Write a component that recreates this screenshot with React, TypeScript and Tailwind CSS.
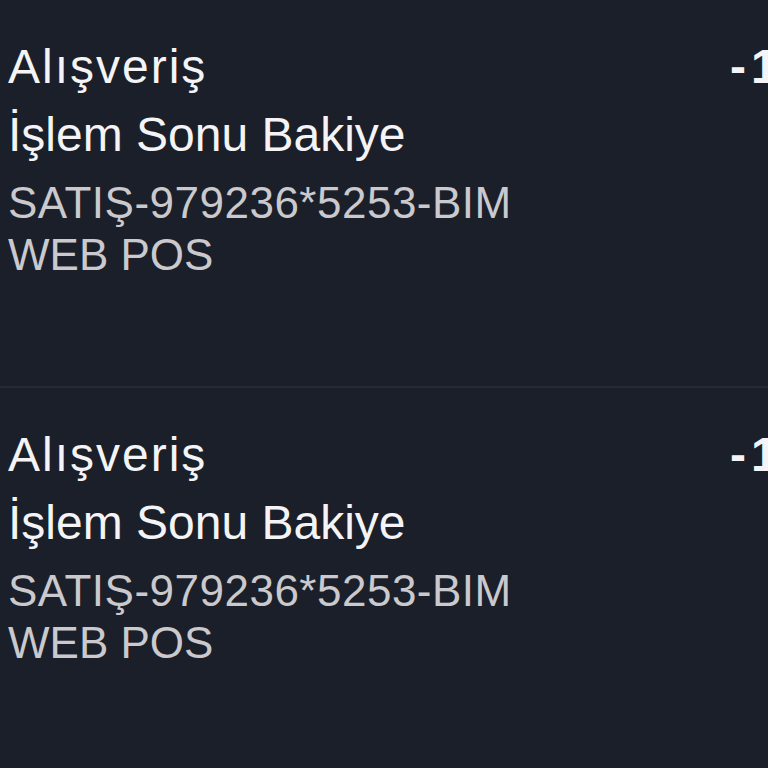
const rows = [
  { title: 'Alışveriş', sub: 'İşlem Sonu Bakiye', desc: 'SATIŞ-979236*5253-BIM', desc2: 'WEB POS', amount: '-150,00 TL' },
  { title: 'Alışveriş', sub: 'İşlem Sonu Bakiye', desc: 'SATIŞ-979236*5253-BIM', desc2: 'WEB POS', amount: '-150,00 TL' },
];

export default function App() {
  return (
    <div className="h-screen w-full overflow-hidden bg-[#1b1f29] font-['Liberation_Sans',Arial,sans-serif]">
      {rows.map((r, i) => (
        <div key={i} className="flex border-b-2 border-[#262a34] pl-2 pt-[33px] pb-[105px]">
          <div className="w-[720px] shrink-0">
            <div className="text-[48px] leading-[68px] tracking-[2px] text-[#f4f4f6]">{r.title}</div>
            <div className="text-[48px] leading-[68px] text-[#f4f4f6]">{r.sub}</div>
            <div className="mt-2 text-[44px] leading-[52px] tracking-[0.5px] text-[#c9c9ce]">{r.desc}</div>
            <div className="text-[44px] leading-[52px] text-[#c9c9ce]">{r.desc2}</div>
          </div>
          <div className="whitespace-nowrap pl-[2px] text-[48px] font-semibold leading-[68px] tracking-[5px] text-[#f4f4f6]">
            {r.amount}
          </div>
        </div>
      ))}
    </div>
  );
}
